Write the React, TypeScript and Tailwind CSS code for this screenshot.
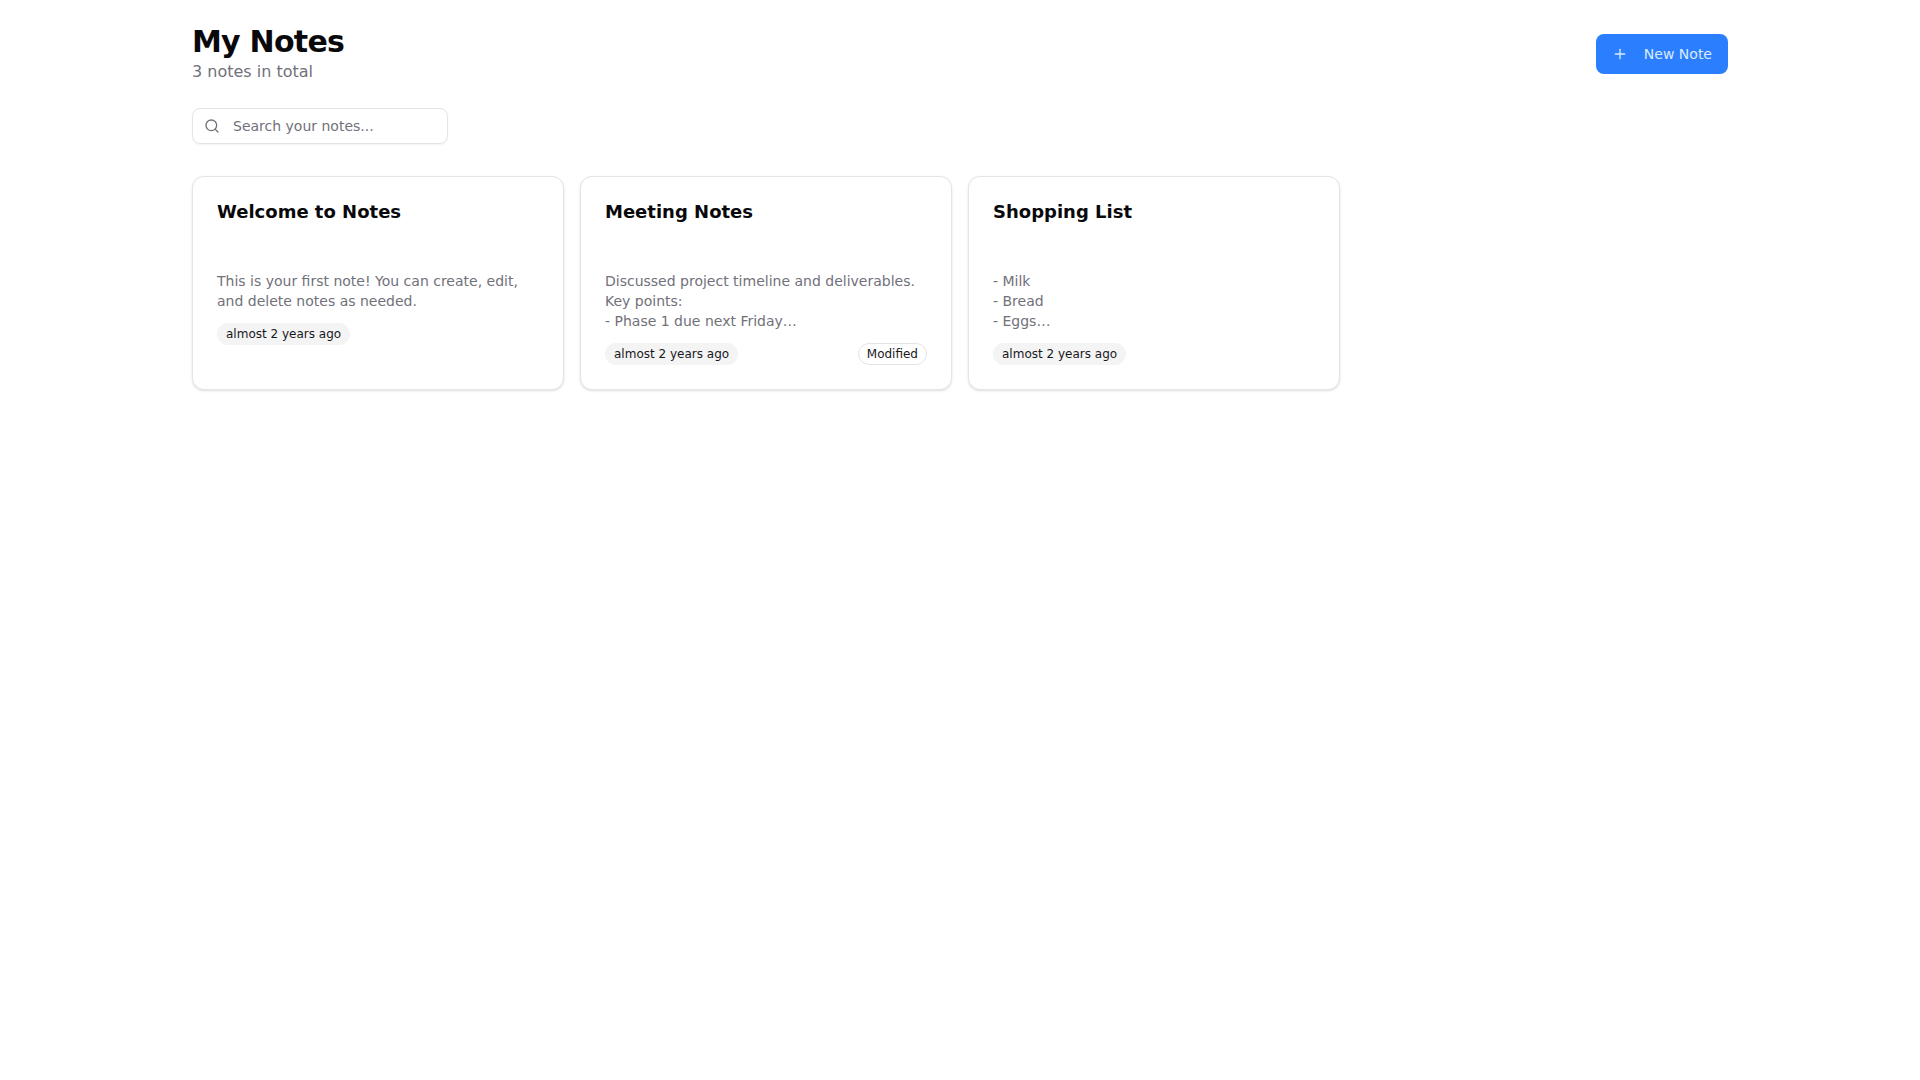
import { Plus, Search } from "lucide-react";

const notes = [
  {
    title: "Welcome to Notes",
    body: ["This is your first note! You can create, edit,", "and delete notes as needed."],
    modified: false,
  },
  {
    title: "Meeting Notes",
    body: ["Discussed project timeline and deliverables.", "Key points:", "- Phase 1 due next Friday…"],
    modified: true,
  },
  {
    title: "Shopping List",
    body: ["- Milk", "- Bread", "- Eggs…"],
    modified: false,
  },
];

function NoteCard({ title, body, modified }: { title: string; body: string[]; modified: boolean }) {
  return (
    <div className="h-[214px] rounded-xl border border-[#e5e5e7] bg-white px-6 pt-[23px] shadow-sm">
      <h3 className="text-lg leading-6 font-bold text-[#09090b]">{title}</h3>
      <div className="mt-[47px] text-sm leading-5 text-[#71717a]">
        {body.map((line) => (
          <p key={line}>{line}</p>
        ))}
      </div>
      <div className="mt-3 flex items-center justify-between">
        <span className="rounded-full bg-[#f4f4f5] px-[9px] py-[3px] text-xs leading-4 text-[#18181b]">
          almost 2 years ago
        </span>
        {modified && (
          <span className="rounded-full border border-[#e4e4e7] px-[8px] py-[2px] text-xs leading-4 text-[#18181b]">
            Modified
          </span>
        )}
      </div>
    </div>
  );
}

export default function App() {
  return (
    <main className="mx-auto min-h-screen w-[1536px] bg-white font-['DejaVu_Sans',sans-serif] antialiased">
      <div className="flex items-center justify-between pt-6">
        <div>
          <h1 className="text-3xl leading-9 font-bold tracking-tight text-[#09090b]">My Notes</h1>
          <p className="text-base leading-6 text-[#71717a]">3 notes in total</p>
        </div>
        <button className="flex h-10 items-center gap-4 rounded-lg bg-[#2b7fff] px-4 text-sm text-blue-100">
          <Plus className="h-4 w-4" />
          New Note
        </button>
      </div>

      <div className="mt-6 flex h-9 w-64 items-center gap-[13px] rounded-lg border border-[#e4e4e7] pl-[11px] shadow-xs">
        <Search className="h-4 w-4 text-[#71717a]" />
        <span className="text-sm text-[#71717a]">Search your notes...</span>
      </div>

      <div className="mt-8 grid grid-cols-4 gap-4">
        {notes.map((note) => (
          <NoteCard key={note.title} {...note} />
        ))}
      </div>
    </main>
  );
}
